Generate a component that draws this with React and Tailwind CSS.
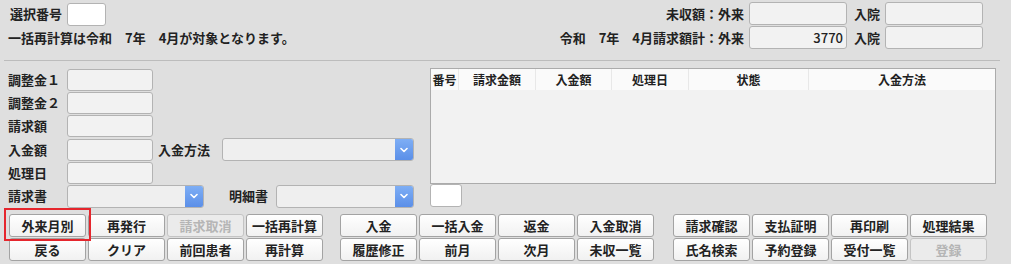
import React from 'react';

const font = 'font-["Noto_Sans_CJK_JP","Noto_Sans",sans-serif]';

const Field = ({ className = '', white, children }) => (
  <div
    className={`h-[22px] rounded-[3px] border border-[#b3b3b3] ${white ? 'bg-white' : 'bg-[#f2f2f2]'} flex items-center justify-end pr-[3px] text-[13px] text-[#222] ${className}`}
  >
    {children}
  </div>
);

const Select = ({ className = '' }) => (
  <div className={`h-[23px] rounded-[3px] border border-[#b3b3b3] bg-[#efefef] flex justify-end overflow-hidden ${className}`}>
    <div className="w-[18px] h-full bg-gradient-to-b from-[#7eaef5] to-[#5b8fe8] flex items-center justify-center">
      <svg width="8" height="6" viewBox="0 0 8 6" fill="none">
        <path d="M1 1.5 L4 4.5 L7 1.5" stroke="white" strokeWidth="1.6" strokeLinecap="round" strokeLinejoin="round" />
      </svg>
    </div>
  </div>
);

const Btn = ({ label, disabled }) => (
  <button
    className={`h-[23px] rounded-[3px] border border-[#a3a3a3] text-[13px] font-semibold leading-none ${
      disabled
        ? 'bg-[#ebebeb] text-[#b5b5b5] border-[#c4c4c4]'
        : 'bg-gradient-to-b from-white to-[#f1f1f1] text-[#222]'
    }`}
  >
    {label}
  </button>
);

const ButtonGroup = ({ rows, className = '' }) => (
  <div className={`grid grid-cols-4 w-[314px] gap-x-[2px] gap-y-px ${className}`}>
    {rows.flat().map((b, i) => (
      <Btn key={i} label={b.label} disabled={b.disabled} />
    ))}
  </div>
);

const leftRows = [
  '調整金１',
  '調整金２',
  '請求額',
];

const columns = [
  { label: '番号', w: 'w-[28px]' },
  { label: '請求金額', w: 'w-[77px]' },
  { label: '入金額', w: 'w-[76px]' },
  { label: '処理日', w: 'w-[77px]' },
  { label: '状態', w: 'w-[120px]' },
  { label: '入金方法', w: 'flex-1' },
];

export default function App() {
  return (
    <div className={`relative w-[1011px] h-[264px] bg-[#dfdfdf] text-[#222] font-semibold ${font}`}>
      {/* header */}
      <div className="flex justify-between pt-[2px] pr-[28px]">
        <div className="flex flex-col">
          <div className="flex items-center h-[24px] pl-[10px]">
            <span className="text-[13px] w-[57px]">選択番号</span>
            <div className="w-[39px] h-[23px] rounded-[3px] border border-[#b3b3b3] bg-white" />
          </div>
          <div className="flex items-center h-[23px] pl-[8px] text-[13px]">
            一括再計算は令和　7年　4月が対象となります。
          </div>
        </div>
        <div className="flex flex-col gap-px">
          <div className="flex items-center justify-end h-[23px]">
            <span className="text-[13px] mr-[5px]">未収額：外来</span>
            <Field className="w-[98px] h-[23px]" />
            <span className="text-[13px] ml-[7px] mr-[5px]">入院</span>
            <Field className="w-[98px] h-[23px]" />
          </div>
          <div className="flex items-center justify-end h-[23px]">
            <span className="text-[13px] mr-[5px]">令和　7年　4月請求額計：外来</span>
            <Field className="w-[98px] h-[23px] font-medium">3770</Field>
            <span className="text-[13px] ml-[7px] mr-[5px]">入院</span>
            <Field className="w-[98px] h-[23px]" />
          </div>
        </div>
      </div>

      <div className="mx-[4px] mt-[11px] mr-[11px] border-t border-[#bcbcbc]" />

      {/* middle */}
      <div className="flex mt-[7px]">
        <div className="w-[430px] pl-[8px] flex flex-col">
          {leftRows.map((l) => (
            <div key={l} className="flex items-center h-[23.3px]">
              <span className="w-[59px] text-[13px]">{l}</span>
              <Field className="w-[86px]" />
            </div>
          ))}
          <div className="flex items-center h-[23.3px]">
            <span className="w-[59px] text-[13px]">入金額</span>
            <Field className="w-[86px]" />
            <span className="ml-[5px] w-[64px] text-[13px]">入金方法</span>
            <Select className="w-[192px]" />
          </div>
          <div className="flex items-center h-[23.3px]">
            <span className="w-[59px] text-[13px]">処理日</span>
            <Field className="w-[86px]" />
          </div>
          <div className="flex items-center h-[23.3px]">
            <span className="w-[59px] text-[13px]">請求書</span>
            <Select className="w-[137px]" />
            <span className="ml-[25px] w-[47px] text-[13px]">明細書</span>
            <Select className="w-[138px]" />
          </div>
        </div>
        <div className="flex flex-col">
          <div className="w-[566px] h-[116px] border border-[#ababab] bg-[#f2f2f2]">
            <div className="flex h-[21px] bg-[#fafafa] text-[12px]">
              {columns.map((c, i) => (
                <div
                  key={c.label}
                  className={`${c.w} flex items-center justify-center ${i < columns.length - 1 ? 'border-r border-[#e8e8e8]' : ''}`}
                >
                  {c.label}
                </div>
              ))}
            </div>
          </div>
          <div className="w-[32px] h-[23px] rounded-[3px] border border-[#b3b3b3] bg-white" />
        </div>
      </div>

      {/* buttons */}
      <div className="flex mt-[6px] pl-[9px]">
        <ButtonGroup
          rows={[
            [{ label: '外来月別' }, { label: '再発行' }, { label: '請求取消', disabled: true }, { label: '一括再計算' }],
            [{ label: '戻る' }, { label: 'クリア' }, { label: '前回患者' }, { label: '再計算' }],
          ]}
        />
        <ButtonGroup
          className="ml-[17px]"
          rows={[
            [{ label: '入金' }, { label: '一括入金' }, { label: '返金' }, { label: '入金取消' }],
            [{ label: '履歴修正' }, { label: '前月' }, { label: '次月' }, { label: '未収一覧' }],
          ]}
        />
        <ButtonGroup
          className="ml-[19px]"
          rows={[
            [{ label: '請求確認' }, { label: '支払証明' }, { label: '再印刷' }, { label: '処理結果' }],
            [{ label: '氏名検索' }, { label: '予約登録' }, { label: '受付一覧' }, { label: '登録', disabled: true }],
          ]}
        />
      </div>

      {/* highlight */}
      <div className="absolute left-[4px] top-[208px] w-[87px] h-[33px] border-2 border-[#e5262d] pointer-events-none" />
    </div>
  );
}
